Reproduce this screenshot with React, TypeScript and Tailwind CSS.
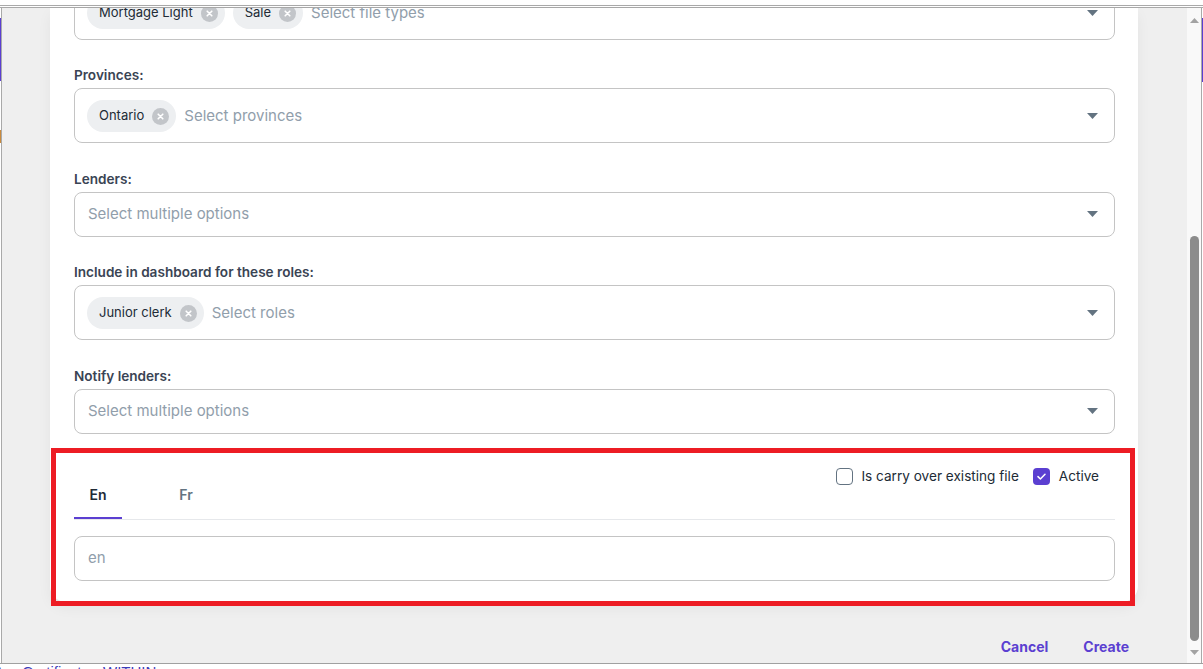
import React from "react";

const FONT = "font-['Inter','Noto_Sans',sans-serif]";

function Chevron() {
  return (
    <svg width="11" height="6" viewBox="0 0 11 6" className="shrink-0">
      <polygon points="0,0 11,0 5.5,6" fill="#637381" />
    </svg>
  );
}

function Chip({ label }: { label: string }) {
  return (
    <div className="flex items-center h-[32px] rounded-full bg-[#edeff1] pl-3 pr-[7px] gap-2 shrink-0">
      <span className="text-[13px] text-[#212b36]">{label}</span>
      <svg width="17" height="17" viewBox="0 0 17 17">
        <circle cx="8.5" cy="8.5" r="8.5" fill="#c2c5c9" />
        <path d="M6.2 6.2 L10.8 10.8 M10.8 6.2 L6.2 10.8" stroke="#fff" strokeWidth="1.6" strokeLinecap="round" />
      </svg>
    </div>
  );
}

function SelectField({
  chips = [],
  placeholder,
  tall = false,
}: {
  chips?: string[];
  placeholder: string;
  tall?: boolean;
}) {
  return (
    <div
      className={
        "flex items-center border border-[#c4c4c4] rounded-lg pr-4 " +
        (tall ? "h-[55px] pl-3 pt-px" : "h-[45px] pl-[13px]")
      }
    >
      <div className="flex items-center gap-2 flex-1 min-w-0">
        {chips.map((c) => (
          <Chip key={c} label={c} />
        ))}
        <span className="text-[15px] text-[#919eab]">{placeholder}</span>
      </div>
      <Chevron />
    </div>
  );
}

function Label({ children, first = false }: { children: React.ReactNode; first?: boolean }) {
  return (
    <div
      className={
        (first ? "mt-6 " : "mt-[24.5px] ") +
        "mb-[2px] h-[22px] leading-[22px] text-[13.6px] font-semibold text-[#3a4454]"
      }
    >
      {children}
    </div>
  );
}

function Check({ checked, label, last = false }: { checked: boolean; label: string; last?: boolean }) {
  return (
    <div className={"flex items-center " + (last ? "mr-4" : "mr-[6px]")}>
      <div className="w-[34px] h-[34px] flex items-center justify-center">
        {checked ? (
          <div className="w-[17px] h-[17px] rounded-[4px] bg-[#5b3fd1] flex items-center justify-center">
            <svg width="9" height="7" viewBox="0 0 9 7">
              <path d="M1 3.6 L3.4 6 L8 1.2" fill="none" stroke="#fff" strokeWidth="1.5" strokeLinecap="round" strokeLinejoin="round" />
            </svg>
          </div>
        ) : (
          <div className="w-[17px] h-[17px] rounded-[4px] border-[1.5px] border-[#637381]" />
        )}
      </div>
      <span className="text-[13.6px] text-[#212b36]">{label}</span>
    </div>
  );
}

export default function App() {
  return (
    <div className={"relative w-[1203px] h-[669px] overflow-hidden bg-white flex flex-col " + FONT}>
      {/* window top edge */}
      <div className="h-[8px] shrink-0 flex flex-col">
        <div className="h-[5px]" />
        <div className="h-px bg-[#a9a9a9]" />
        <div className="h-px bg-white" />
        <div className="h-px bg-[#a9a9a9]" />
      </div>

      <div className="flex flex-1 min-h-0">
        {/* left edge, page peeking behind */}
        <div className="w-px flex flex-col">
          <div className="h-[10px]" />
          <div className="h-[63px] bg-[#5b3fd1]" />
          <div className="h-[49px]" />
          <div className="h-[13px] bg-[#c98a3c]" />
        </div>
        <div className="w-px bg-[#a9a9a9]" />

        {/* backdrop */}
        <div className="w-[1185px] bg-[#efefef] flex pl-[48px]">
          <div className="w-[1088px] flex flex-col">
            <div className="h-[594px] bg-white rounded-b-2xl overflow-hidden shadow-[0_6px_14px_rgba(0,0,0,0.05)]">
              <div className="-mt-[23px] pl-6 pr-[23px] flex flex-col">
                <SelectField tall chips={["Mortgage Light", "Sale"]} placeholder="Select file types" />

                <Label first>Provinces:</Label>
                <SelectField tall chips={["Ontario"]} placeholder="Select provinces" />

                <Label>Lenders:</Label>
                <SelectField placeholder="Select multiple options" />

                <Label>Include in dashboard for these roles:</Label>
                <SelectField tall chips={["Junior clerk"]} placeholder="Select roles" />

                <Label>Notify lenders:</Label>
                <SelectField placeholder="Select multiple options" />

                {/* language tabs */}
                <div className="mt-[26px] flex justify-between items-start border-b border-[#e6e8eb]">
                  <div className="flex mt-[11px] h-[48px]">
                    <div className="relative w-[48px] flex items-center justify-center text-[14px] font-semibold text-[#212b36]">
                      En
                      <div className="absolute left-0 right-0 bottom-0 h-[2px] bg-[#5b3fd1]" />
                    </div>
                    <div className="ml-10 w-[48px] flex items-center justify-center text-[14px] font-semibold text-[#637381]">
                      Fr
                    </div>
                  </div>
                  <div className="flex items-center h-[34px]">
                    <Check checked={false} label="Is carry over existing file" />
                    <Check checked last label="Active" />
                  </div>
                </div>

                <div className="mt-4 h-[45px] border border-[#c4c4c4] rounded-lg flex items-center pl-[13px] text-[15px] text-[#919eab]">
                  en
                </div>
              </div>
            </div>

            <div className="mt-[29px] h-[30px] flex justify-end items-center gap-[35px] pr-[9px]">
              <button className="text-[14px] font-bold text-[#5b3fd1]">Cancel</button>
              <button className="text-[14px] font-bold text-[#5b3fd1]">Create</button>
            </div>
          </div>
        </div>

        {/* scrollbar */}
        <div className="w-[14px] bg-[#f9f9f9] flex flex-col items-center">
          <svg width="9" height="5" viewBox="0 0 9 5" className="mt-[10px]">
            <polygon points="0,5 9,5 4.5,0" fill="#a3a3a3" />
          </svg>
          <div className="mt-[213px] w-[9px] h-[405px] rounded-full bg-[#8c8c8c]" />
          <svg width="9" height="5" viewBox="0 0 9 5" className="mt-[9px]">
            <polygon points="0,0 9,0 4.5,5" fill="#a3a3a3" />
          </svg>
        </div>

        {/* right edge */}
        <div className="w-px bg-[#a9a9a9]" />
        <div className="w-px flex flex-col">
          <div className="h-[10px]" />
          <div className="h-[64px] bg-[#5b3fd1]" />
        </div>
      </div>

      {/* window bottom edge and page behind */}
      <div className="h-px bg-[#a0a0a0] shrink-0" />
      <div className="h-[5px] shrink-0 overflow-hidden">
        <div className="-ml-[2px] text-[15px] leading-[15px] text-[#3c3cb8] underline font-['Liberation_Sans',sans-serif]">
          tus Certificate - WITHIN
        </div>
      </div>

      {/* red highlight annotation over the language section */}
      <div className="absolute left-[51px] top-[448px] w-[1084px] h-[158px] border-[5px] border-[#ed1c24] pointer-events-none" />
    </div>
  );
}
